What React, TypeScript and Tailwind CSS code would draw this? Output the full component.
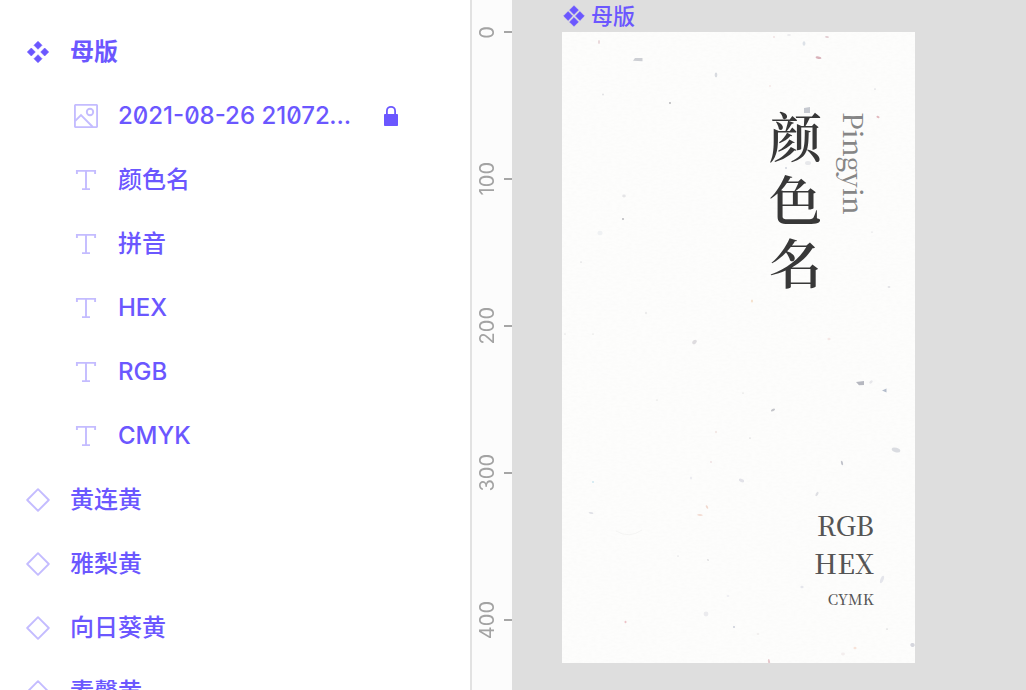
type IconKind = "component" | "image" | "text" | "instance";

interface Layer {
  name: string;
  kind: IconKind;
  nested?: boolean;
  locked?: boolean;
}

const layers: Layer[] = [
  { name: "母版", kind: "component" },
  { name: "2021-08-26 210724.png", kind: "image", nested: true, locked: true },
  { name: "颜色名", kind: "text", nested: true },
  { name: "拼音", kind: "text", nested: true },
  { name: "HEX", kind: "text", nested: true },
  { name: "RGB", kind: "text", nested: true },
  { name: "CMYK", kind: "text", nested: true },
  { name: "黄连黄", kind: "instance" },
  { name: "雅梨黄", kind: "instance" },
  { name: "向日葵黄", kind: "instance" },
  { name: "素馨黄", kind: "instance" },
];

const rulerMarks = [0, 100, 200, 300, 400];

// Paper flecks: centre x, centre y, x radius, y radius, rotation, colour
type Fleck = [number, number, number, number, number, string];

const flecks: Fleck[] = [
  [37, 10, 0.8, 2, 0, "#e3cdd0"],
  [108, 71, 0.9, 0.9, 0, "#b0b0b4"],
  [41, 62.5, 1, 1, 0, "#e2e2e4"],
  [154, 43, 1.3, 2.4, 0, "#d8dbe0"],
  [212, 5, 1, 0.8, 0, "#ecd6d8"],
  [227, 3, 2, 0.8, 0, "#e5e5e9"],
  [242, 11.5, 1.4, 2.2, 0, "#dde2e8"],
  [265, 5, 2, 0.9, 10, "#e3cfd3"],
  [256.5, 25.7, 3, 1.2, 10, "#d9b2ba"],
  [208, 54, 1, 0.8, 0, "#f2dfe0"],
  [313, 57, 0.8, 0.6, 0, "#c9c9cf"],
  [316, 85, 1.6, 1, 20, "#e2b9be"],
  [246, 131, 3, 2, 0, "#e7e8eb"],
  [224, 136, 1, 1, 0, "#d0d4dd"],
  [62, 164, 1.8, 1.4, 0, "#e5e5e7"],
  [61, 187, 1, 0.9, 0, "#b9b9bd"],
  [38, 201, 2.6, 2.2, 0, "#eff1f3"],
  [19, 230, 0.7, 0.6, 0, "#c5c5c9"],
  [190, 269, 0.9, 1.6, 0, "#f3dcc4"],
  [84, 281, 1.2, 1.2, 0, "#ececec"],
  [132.5, 310, 2.6, 1.8, -40, "#dedcdf"],
  [267, 307, 1.6, 1.2, 0, "#f5e8e6"],
  [3, 302, 0.6, 0.6, 0, "#d2d2d2"],
  [31, 302, 0.6, 0.6, 0, "#d2d2d2"],
  [310, 200, 0.8, 0.6, 0, "#dadade"],
  [327, 255, 1.4, 0.9, 0, "#e2e2e6"],
  [309, 350, 2, 1.2, -40, "#e7e7ea"],
  [211, 378, 2.2, 1.2, -25, "#c4c5ca"],
  [181, 361, 0.8, 0.6, 0, "#d8d8d8"],
  [95, 368, 0.6, 0.5, 0, "#d2d2d2"],
  [188, 406, 0.7, 0.6, 0, "#c2c2c4"],
  [154, 400, 0.8, 1.2, 0, "#f0e2de"],
  [334, 418, 4.4, 2.2, 15, "#dadce1"],
  [280, 431, 1, 2.2, -15, "#c0c2ca"],
  [179.5, 448.5, 2.8, 1.6, 20, "#e2e2e8"],
  [149, 430, 0.6, 1, 0, "#e7cfd0"],
  [129, 446, 1.2, 1.6, 0, "#ececf0"],
  [255, 462, 1.2, 2.4, 30, "#dedfe3"],
  [31, 450, 1, 0.8, 0, "#b9ddeb"],
  [29, 481, 2.4, 0.9, 10, "#e1e2e7"],
  [145, 475, 0.9, 2, -30, "#f1d8cd"],
  [138, 483, 2.8, 0.9, 5, "#f3ddd4"],
  [320, 547.5, 1.6, 4, 20, "#e4e5eb"],
  [240, 555, 1.6, 1.2, 0, "#e5e6ec"],
  [166, 564, 1.4, 1, 0, "#eeeef2"],
  [144, 582, 2.4, 2.4, 0, "#ebebee"],
  [63.5, 590, 1, 1.2, 0, "#ecc3c8"],
  [172, 595, 1, 0.8, 0, "#b5b9cb"],
  [146, 528, 0.9, 0.6, 20, "#c9c9cd"],
  [116, 524, 0.6, 0.5, 0, "#c9c9cd"],
  [325, 597, 0.7, 0.6, 0, "#bdbdbf"],
  [196, 602, 1.4, 0.9, 0, "#f1efee"],
  [293, 616, 1.5, 1.2, 0, "#f7e3d9"],
  [281, 622, 2, 1.4, 0, "#f3eeee"],
  [350.5, 613, 2.2, 2, 20, "#d5d6dd"],
  [207, 629.5, 1, 2.6, -10, "#e6c8cc"],
];

function FourDiamonds({ reach, half, className }: { reach: number; half: number; className: string }) {
  const centres = [
    [0, -reach],
    [reach, 0],
    [0, reach],
    [-reach, 0],
  ];
  return (
    <svg viewBox="-12 -12 24 24" className={className} fill="currentColor" aria-hidden="true">
      {centres.map(([x, y]) => (
        <path
          key={`${x},${y}`}
          d={`M${x} ${y - half}L${x + half} ${y}L${x} ${y + half}L${x - half} ${y}Z`}
          stroke="currentColor"
          strokeWidth="0.6"
          strokeLinejoin="round"
        />
      ))}
    </svg>
  );
}

function LayerIcon({ kind }: { kind: IconKind }) {
  if (kind === "component") {
    return <FourDiamonds reach={6.7} half={4} className="size-6 shrink-0" />;
  }
  return (
    <svg
      viewBox="0 0 24 24"
      className="size-6 shrink-0 text-[#c4bcff]"
      fill="none"
      stroke="currentColor"
      strokeWidth="1.9"
      aria-hidden="true"
    >
      {kind === "image" && (
        <>
          <rect x="0.9" y="0.9" width="22.2" height="22.2" rx="0.8" />
          <circle cx="16" cy="8" r="3.2" />
          <path d="M1 17.2L7 11.2L18.8 23" />
        </>
      )}
      {kind === "text" && <path d="M2.9 6V2.9H21.1V6M12 2.9V21.1M8 21.1H16" />}
      {kind === "instance" && <path d="M12 1.2L22.8 12L12 22.8L1.2 12Z" strokeLinejoin="round" />}
    </svg>
  );
}

function LayerRow({ layer }: { layer: Layer }) {
  return (
    <li className={`flex h-16 items-center gap-5 pr-[70px] ${layer.nested ? "pl-[74px]" : "pl-[26px]"}`}>
      <LayerIcon kind={layer.kind} />
      <span
        className={`w-[236px] truncate text-2xl ${layer.kind === "component" ? "font-bold" : "font-medium"}`}
      >
        {layer.name}
      </span>
      {layer.locked && (
        <button type="button" aria-label="Unlock layer" className="ml-auto flex w-[18px] justify-center">
          <svg viewBox="0 0 18 24" className="h-6 w-[18px]" fill="none" aria-hidden="true">
            <rect x="2" y="10" width="14" height="12" rx="0.8" fill="currentColor" />
            <path d="M4.9 10V6.9a4.1 4.1 0 0 1 8.2 0V10" stroke="currentColor" strokeWidth="1.8" />
          </svg>
        </button>
      )}
    </li>
  );
}

function Ruler() {
  return (
    <div className="w-[42px] shrink-0 overflow-hidden border-l-2 border-[#e2e2e2] bg-[#fcfcfc] text-[#a3a3a3]">
      <ol className="-mt-2 flex flex-col gap-[67px]">
        {rulerMarks.map((mark) => (
          <li key={mark} className="flex h-20 shrink-0 items-center justify-between pl-[3px]">
            <span className="rotate-180 text-xl leading-6 [writing-mode:vertical-rl]">{mark}</span>
            <span className="h-[2px] w-2 bg-[#a6a6a6]" />
          </li>
        ))}
      </ol>
    </div>
  );
}

function Paper() {
  return (
    <svg className="absolute inset-0 size-full" viewBox="0 0 353 631" aria-hidden="true">
      <filter id="grain" x="0" y="0" width="100%" height="100%">
        <feTurbulence type="fractalNoise" baseFrequency="0.2 0.5" numOctaves="3" seed="4" />
        <feColorMatrix values="0 0 0 0 0.5  0 0 0 0 0.5  0 0 0 0 0.48  0.07 0 0 0 -0.025" />
      </filter>
      <rect width="353" height="631" filter="url(#grain)" />
      {flecks.map(([x, y, rx, ry, turn, fill]) => (
        <ellipse key={`${x}-${y}`} cx={x} cy={y} rx={rx} ry={ry} fill={fill} transform={`rotate(${turn} ${x} ${y})`} />
      ))}
      <path d="M71 28.8L73 26H80.5V29.2Z" fill="#cdcfd4" />
      <path d="M242 76L248 75V81H242Z" fill="#c6c9d0" />
      <path d="M294 350L302 349V353L297 353.3Z" fill="#b6b8c0" />
      <path d="M320 358.5L324.5 356.6V360.6Z" fill="#b3bccb" />
      <path d="M54 499Q67 507 80 498" fill="none" stroke="#f3f3f1" strokeWidth="0.8" />
    </svg>
  );
}

export default function App() {
  return (
    <div className="flex h-screen overflow-hidden bg-white font-['Inter','Noto_Sans_CJK_SC',sans-serif] text-[#6b57ff]">
      <nav aria-label="Layers" className="w-[470px] shrink-0 overflow-hidden pt-5">
        <ul className="slashed-zero">
          {layers.map((layer) => (
            <LayerRow key={layer.name} layer={layer} />
          ))}
        </ul>
      </nav>
      <Ruler />
      <main className="min-w-0 flex-1 overflow-hidden bg-[#dedede] pl-[50px]">
        <h1 className="flex h-8 items-center gap-[5px] text-[22px] leading-8 font-medium">
          <FourDiamonds reach={5.9} half={4.4} className="size-6 shrink-0" />
          母版
        </h1>
        <article className="relative h-[631px] w-[353px] bg-[#fdfdfc] font-['Noto_Serif_CJK_SC','Source_Han_Serif_SC','Liberation_Serif','Noto_Sans_CJK_SC',serif]">
          <Paper />
          <div className="relative flex h-full flex-col items-end justify-between pt-[72px] pr-[41px] pb-12">
            <div className="flex gap-3">
              <h2 className="w-[53px] text-[53px] leading-[63px] font-semibold break-all text-[#383838]">颜色名</h2>
              <p className="pt-2 text-[27px] leading-10 font-medium text-[#868686] [writing-mode:vertical-rl]">
                Pingyin
              </p>
            </div>
            <div className="text-right text-[27px] leading-[38px] font-medium text-[#555555]">
              <p>RGB</p>
              <p>HEX</p>
              <p className="text-[15px] leading-[33px]">CYMK</p>
            </div>
          </div>
        </article>
      </main>
    </div>
  );
}
